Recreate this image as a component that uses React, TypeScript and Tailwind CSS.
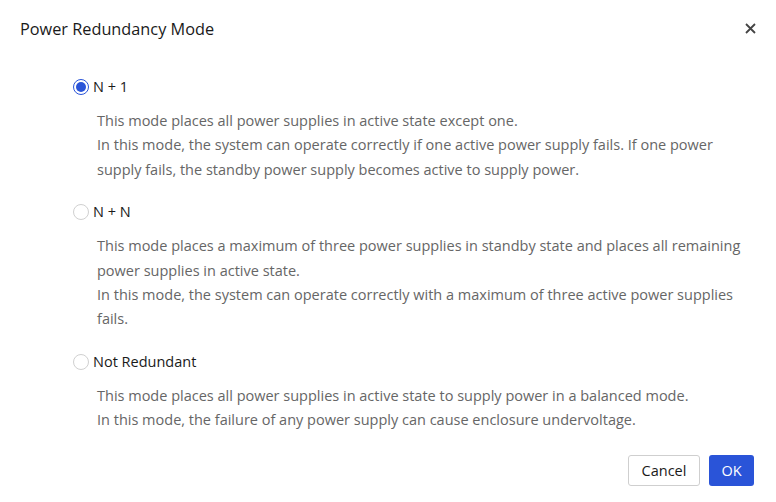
import { useState } from "react";

const options = [
  {
    id: "n1",
    label: "N + 1",
    lines: [
      "This mode places all power supplies in active state except one.",
      "In this mode, the system can operate correctly if one active power supply fails. If one power supply fails, the standby power supply becomes active to supply power.",
    ],
  },
  {
    id: "nn",
    label: "N + N",
    lines: [
      "This mode places a maximum of three power supplies in standby state and places all remaining power supplies in active state.",
      "In this mode, the system can operate correctly with a maximum of three active power supplies fails.",
    ],
  },
  {
    id: "none",
    label: "Not Redundant",
    lines: [
      "This mode places all power supplies in active state to supply power in a balanced mode.",
      "In this mode, the failure of any power supply can cause enclosure undervoltage.",
    ],
  },
];

export default function App() {
  const [mode, setMode] = useState("n1");

  return (
    <div
      className="w-[776px] h-[502px] bg-white flex flex-col text-[#1a1a1a]"
      style={{ fontFamily: '"Open Sans", "Noto Sans", sans-serif' }}
    >
      {/* Header */}
      <div className="flex items-start justify-between pl-5 pr-[20px] pt-[17px] h-[42px]">
        <h2 className="text-[16.3px] leading-[24px]">Power Redundancy Mode</h2>
        <button className="mt-[5px] w-[12px] h-[12px] flex items-center justify-center text-[#444]">
          <svg width="11" height="11" viewBox="0 0 11 11">
            <path d="M1 1L10 10M10 1L1 10" stroke="currentColor" strokeWidth="1.8" />
          </svg>
        </button>
      </div>

      {/* Options */}
      <div className="flex flex-col pl-[73px] pr-[24px] pt-[33px] gap-[18px]">
        {options.map((o) => (
          <div key={o.id} className="flex flex-col">
            <label
              className="flex items-center gap-[4px] h-[24px] cursor-pointer"
              onClick={() => setMode(o.id)}
            >
              <span
                className={
                  mode === o.id
                    ? "w-4 h-4 rounded-full border border-[#2a54d8] flex items-center justify-center"
                    : "w-4 h-4 rounded-full border border-[#d0d0d0]"
                }
              >
                {mode === o.id && <span className="w-[10px] h-[10px] rounded-full bg-[#2a54d8]" />}
              </span>
              <span className="text-[14.5px]">{o.label}</span>
            </label>
            <div className="pl-[24px] pt-[10px] text-[14.5px] leading-[24.4px] text-[#666]">
              {o.lines.map((l, i) => (
                <p key={i}>{l}</p>
              ))}
            </div>
          </div>
        ))}
      </div>

      {/* Footer */}
      <div className="mt-auto flex justify-end gap-[9px] pr-[22px] pb-[16px]">
        <button className="w-[72px] h-[31px] border border-[#cfcfcf] rounded-[3px] text-[14.5px] text-[#1a1a1a] bg-white">
          Cancel
        </button>
        <button className="w-[45px] h-[31px] rounded-[3px] text-[14.5px] text-white bg-[#2a54d8]">
          OK
        </button>
      </div>
    </div>
  );
}
